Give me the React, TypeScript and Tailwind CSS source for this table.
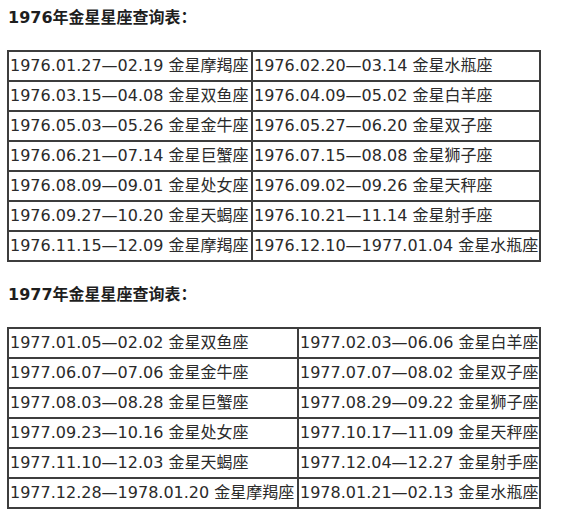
const table1976: [string, string][] = [
  ['1976.01.27—02.19 金星摩羯座', '1976.02.20—03.14 金星水瓶座'],
  ['1976.03.15—04.08 金星双鱼座', '1976.04.09—05.02 金星白羊座'],
  ['1976.05.03—05.26 金星金牛座', '1976.05.27—06.20 金星双子座'],
  ['1976.06.21—07.14 金星巨蟹座', '1976.07.15—08.08 金星狮子座'],
  ['1976.08.09—09.01 金星处女座', '1976.09.02—09.26 金星天秤座'],
  ['1976.09.27—10.20 金星天蝎座', '1976.10.21—11.14 金星射手座'],
  ['1976.11.15—12.09 金星摩羯座', '1976.12.10—1977.01.04 金星水瓶座'],
];

const table1977: [string, string][] = [
  ['1977.01.05—02.02 金星双鱼座', '1977.02.03—06.06 金星白羊座'],
  ['1977.06.07—07.06 金星金牛座', '1977.07.07—08.02 金星双子座'],
  ['1977.08.03—08.28 金星巨蟹座', '1977.08.29—09.22 金星狮子座'],
  ['1977.09.23—10.16 金星处女座', '1977.10.17—11.09 金星天秤座'],
  ['1977.11.10—12.03 金星天蝎座', '1977.12.04—12.27 金星射手座'],
  ['1977.12.28—1978.01.20 金星摩羯座', '1978.01.21—02.13 金星水瓶座'],
];

function VenusTable({ rows, first }: { rows: [string, string][]; first: string }) {
  return (
    <table className="w-[534px] table-fixed border-collapse border-2 border-[#3d3d3d]">
      <colgroup>
        <col className={first} />
        <col />
      </colgroup>
      <tbody>
        {rows.map(([a, b]) => (
          <tr key={a}>
            <td className="h-[30px] whitespace-nowrap border-2 border-[#3d3d3d] p-0 pl-px align-middle">{a}</td>
            <td className="h-[30px] whitespace-nowrap border-2 border-[#3d3d3d] p-0 pl-px align-middle">{b}</td>
          </tr>
        ))}
      </tbody>
    </table>
  );
}

export default function App() {
  return (
    <div className="min-h-[522px] bg-white px-[7px] pt-[6px] font-['DejaVu_Sans','Noto_Sans_CJK_SC',sans-serif] text-[16px] leading-6 text-[#2a2a2a]">
      <p className="mb-[20px] pl-px font-bold text-[#1e1e1e]">1976年金星星座查询表：</p>
      <VenusTable rows={table1976} first="w-[244px]" />
      <p className="mb-[20px] mt-[21px] pl-px font-bold text-[#1e1e1e]">1977年金星星座查询表：</p>
      <VenusTable rows={table1977} first="w-[290px]" />
    </div>
  );
}
